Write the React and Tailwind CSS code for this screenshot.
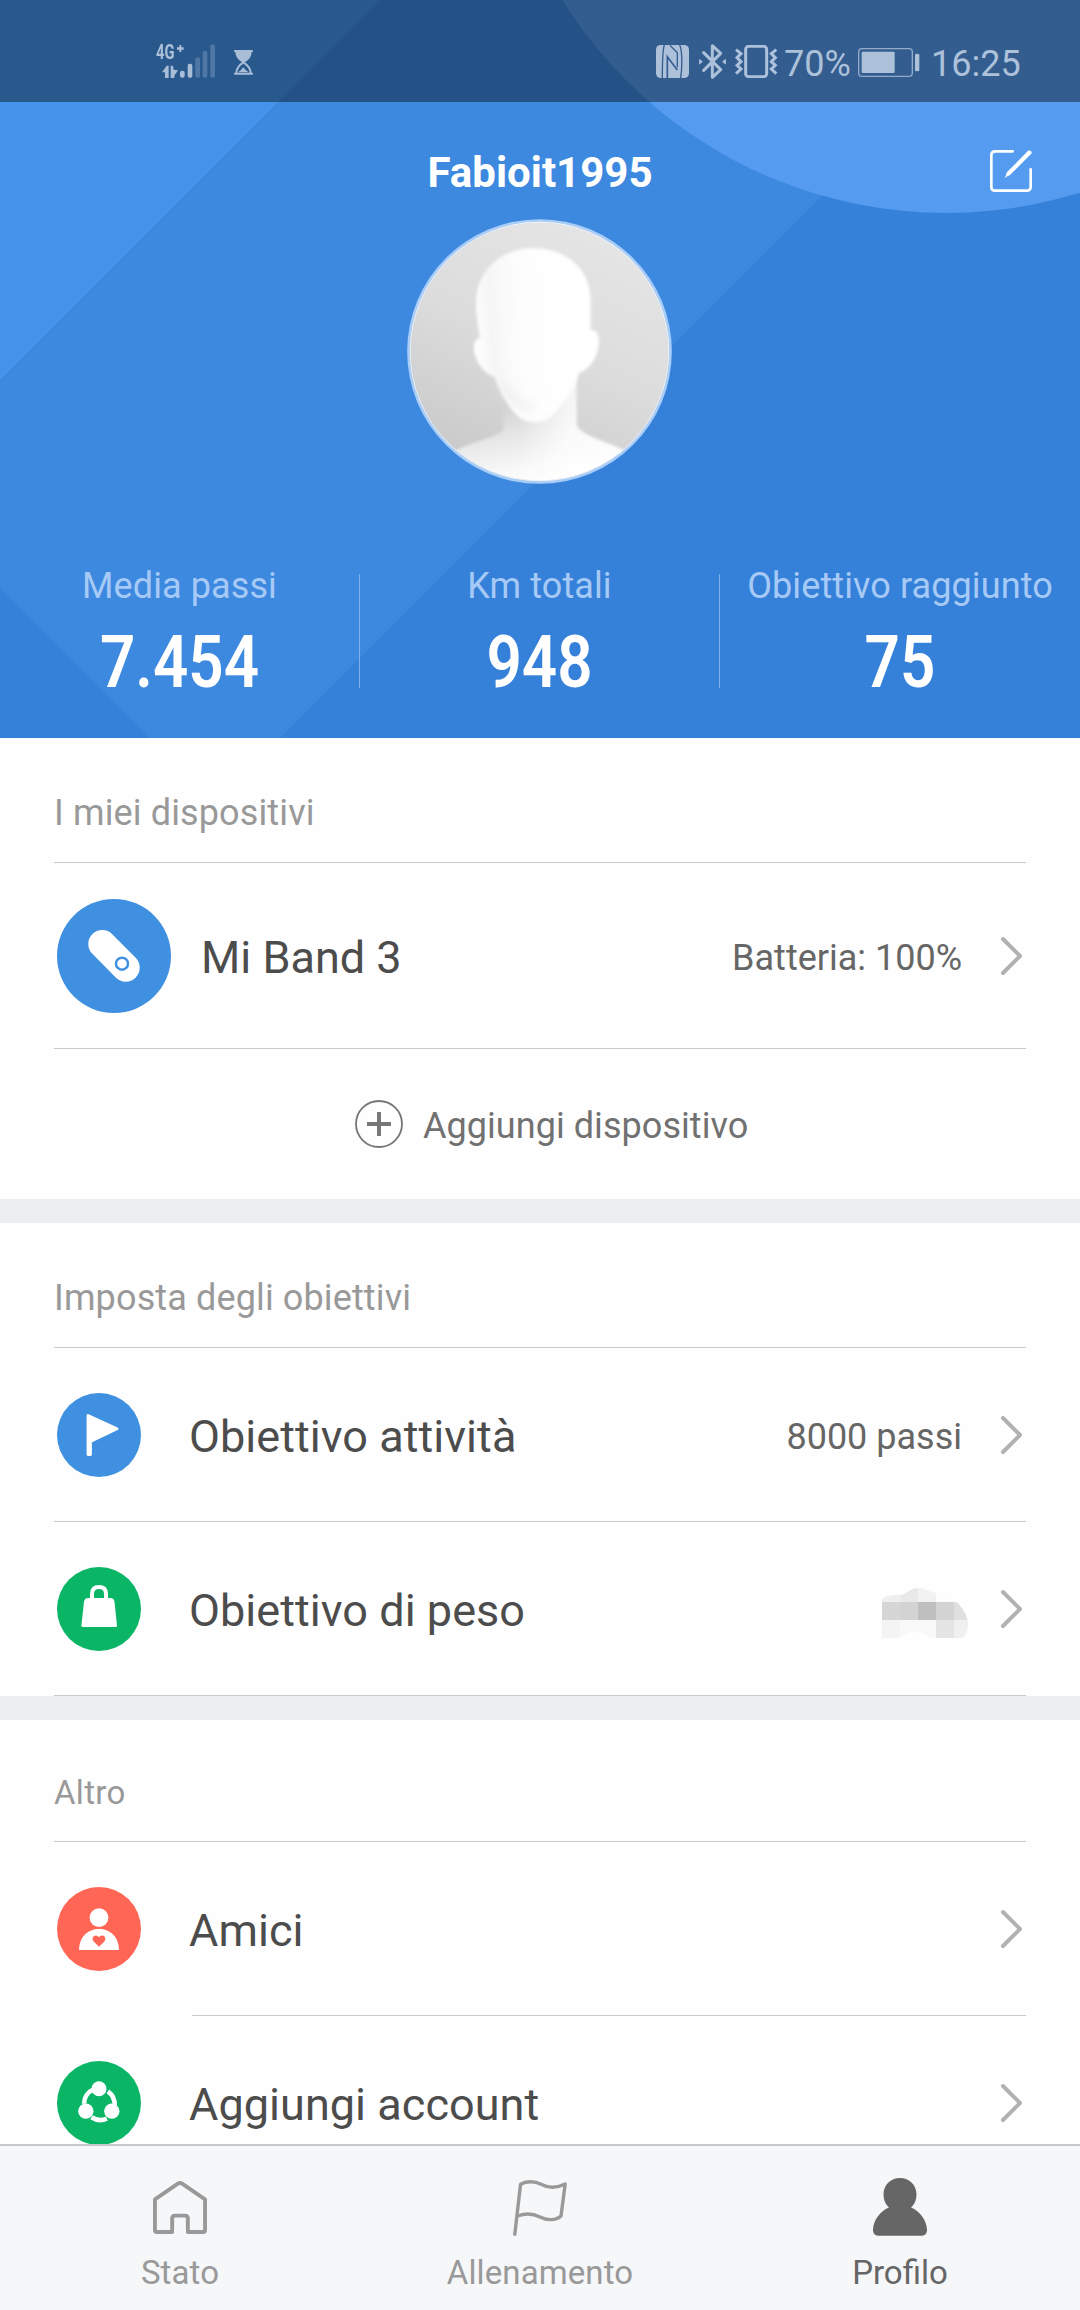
import React from "react";

function HeaderBackdrop() {
  return (
    <svg className="absolute inset-0 h-full w-full" viewBox="0 0 1080 738" preserveAspectRatio="none">
      <rect width="1080" height="738" fill="#3581d9" />
      <path d="M0 0H1018L280 738H150L0 588Z" fill="#3e89e0" />
      <path d="M0 0H380L0 380Z" fill="#4593ea" />
      <circle cx="946" cy="-239" r="452" fill="#559bef" />
    </svg>
  );
}

function SignalIcon() {
  return (
    <svg className="block h-[34px] w-[62px]" viewBox="48 73 186 102" fill="#a9bdd7">
      <path d="M75 175V158H66L80 138H86V175ZM92 138H99L101 150L114 152L103 168V175H92Z" />
      <rect x="120" y="153" width="14" height="21" rx="6" />
      <rect x="143" y="132" width="14" height="42" rx="6" />
      <g fill="#5078a7">
        <rect x="166" y="113" width="14" height="61" rx="6" />
        <rect x="188" y="93" width="14" height="81" rx="6" />
        <rect x="211" y="74" width="14" height="100" rx="6" />
      </g>
      <path d="M118 76H124V83H131V90H124V97H118V90H111V83H118Z" />
    </svg>
  );
}

function HourglassIcon() {
  return (
    <svg className="block h-[25px] w-[19px]" viewBox="282 90 57 75" fill="#a9bdd7">
      <rect x="282" y="90" width="57" height="6" rx="2" />
      <rect x="282" y="158" width="57" height="6" rx="2" />
      <path d="M286 94H335C335 112 325 121 314 127H307C296 121 286 112 286 94Z" />
      <path d="M289 160C289 143 298 135 310 127C323 135 332 143 332 160" fill="none" stroke="#a9bdd7" strokeWidth="6" />
      <path d="M294 157C300 153 305 149 310 142C315 149 320 153 327 157Z" />
    </svg>
  );
}

function NfcIcon() {
  return (
    <svg className="block h-[33px] w-[33px]" viewBox="48 75 99 99">
      <rect x="48" y="75" width="99" height="99" rx="14" fill="#adc1da" />
      <g fill="none" stroke="#345d90" strokeLinejoin="miter">
        <path d="M73 75C67 92 67 120 67 174" strokeWidth="4" />
        <path d="M82 174V110L112 150" strokeWidth="5" />
        <path d="M112 142V98L90 76" strokeWidth="4" />
        <path d="M119 75C127 92 127 140 122 174" strokeWidth="4" />
      </g>
    </svg>
  );
}

function BluetoothIcon() {
  return (
    <svg className="block h-[35px] w-[27px]" viewBox="177 72 81 105" fill="none" stroke="#adc1da" strokeWidth="9" strokeLinejoin="round" strokeLinecap="round">
      <path d="M191 98L242 149L217 172V77L242 100L191 151" />
      <path d="M179 119L187 125L179 131ZM256 119L248 125L256 131Z" fill="#adc1da" strokeWidth="3" />
    </svg>
  );
}

function VibrateIcon() {
  return (
    <svg className="block h-[33px] w-[43px]" viewBox="287 75 129 99" fill="none" stroke="#adc1da" strokeWidth="9">
      <rect x="319" y="79" width="63" height="91" rx="9" />
      <path strokeWidth="9" d="M290 89L305 101L293 113L305 125L293 136L305 147L290 161M411 89L396 101L408 113L396 125L408 136L396 147L411 161" />
    </svg>
  );
}

function BatteryIcon() {
  return (
    <svg className="block h-[29px] w-[62px]" viewBox="658 84 186 87">
      <rect x="660" y="86" width="161" height="83" rx="10" fill="none" stroke="#94abc9" strokeWidth="4" />
      <rect x="669" y="95" width="99" height="64" rx="3" fill="#adc1da" />
      <rect x="829" y="101" width="13" height="53" rx="5" fill="#adc1da" />
    </svg>
  );
}

function StatusBar() {
  return (
    <div className="relative flex h-[102px] items-start bg-black/40 text-[#adc1da]">
      <div className="relative ml-[156px] mt-[44px]">
        <SignalIcon />
        <span className="absolute left-0 top-0 origin-left scale-x-[0.7] text-[21px] font-bold leading-[17px]">4G</span>
      </div>
      <div className="ml-[16px] mt-[50px]"><HourglassIcon /></div>
      <div className="ml-[403px] mt-[45px]"><NfcIcon /></div>
      <div className="ml-[10px] mt-[44px]"><BluetoothIcon /></div>
      <div className="ml-[9px] mt-[45px]"><VibrateIcon /></div>
      <span className="ml-[6px] mt-[43px] w-[68px] text-[36px] leading-[42px]">70%</span>
      <div className="ml-[6px] mt-[48px]"><BatteryIcon /></div>
      <span className="ml-[11px] mt-[43px] text-[36px] leading-[42px]">16:25</span>
    </div>
  );
}

function EditIcon() {
  return (
    <svg className="block h-[42px] w-[42px]" viewBox="1050 390 126 126" fill="none" stroke="#fff" strokeWidth="8" strokeLinecap="round">
      <path d="M1118 394H1066Q1054 394 1054 406V500Q1054 512 1066 512H1160Q1172 512 1172 500V448" />
      <path d="M1166 391L1175 400L1112 463L1094 474L1103 455Z" fill="#fff" stroke="none" />
      <path d="M1169 397L1105 461" strokeWidth="11" />
    </svg>
  );
}

function Avatar() {
  return (
    <svg className="ml-[407px] block h-[265px] w-[265px]" viewBox="81 267 795 795">
      <defs>
        <clipPath id="avatar-clip"><circle cx="478.5" cy="664.5" r="387" /></clipPath>
        <linearGradient id="avatar-bg" x1="0.75" y1="0" x2="0.3" y2="1">
          <stop offset="0" stopColor="#e6e6e6" />
          <stop offset="0.5" stopColor="#dcdcdc" />
          <stop offset="1" stopColor="#c8c8c8" />
        </linearGradient>
        <linearGradient id="avatar-face" x1="0" y1="0.55" x2="1" y2="0.45">
          <stop offset="0" stopColor="#fff" />
          <stop offset="0.14" stopColor="#f6f6f6" />
          <stop offset="0.38" stopColor="#fdfdfd" />
          <stop offset="1" stopColor="#fff" />
        </linearGradient>
        <linearGradient id="avatar-neck" gradientUnits="userSpaceOnUse" x1="400" y1="820" x2="440" y2="1060">
          <stop offset="0" stopColor="#d2d2d2" />
          <stop offset="0.35" stopColor="#e4e4e4" />
          <stop offset="0.8" stopColor="#f8f8f8" />
          <stop offset="1" stopColor="#fdfdfd" />
        </linearGradient>
        <linearGradient id="avatar-neck-light" gradientUnits="userSpaceOnUse" x1="370" y1="0" x2="600" y2="0">
          <stop offset="0.2" stopColor="#fff" stopOpacity="0" />
          <stop offset="0.85" stopColor="#fff" stopOpacity="0.75" />
        </linearGradient>
        <filter id="avatar-soft"><feGaussianBlur stdDeviation="4" /></filter>
        <filter id="avatar-shade" x="-50%" y="-50%" width="200%" height="200%"><feGaussianBlur stdDeviation="14" /></filter>
      </defs>
      <circle cx="478.5" cy="664.5" r="397" fill="#a9cdf6" />
      <circle cx="478.5" cy="664.5" r="389" fill="#f3f7fc" />
      <g clipPath="url(#avatar-clip)">
        <rect x="81" y="267" width="795" height="795" fill="url(#avatar-bg)" />
        <g filter="url(#avatar-soft)">
          <path d="M370 770V895C365 920 290 930 225 962L180 1100H780L735 962C680 935 600 915 590 885V730Z" fill="url(#avatar-neck)" />
          <path d="M370 770V895C365 920 290 930 225 962L180 1100H780L735 962C680 935 600 915 590 885V730Z" fill="url(#avatar-neck-light)" />
        </g>
        <g filter="url(#avatar-soft)">
          <path d="M460 354C560 354 632 420 632 510V600C650 600 660 615 656 645C652 685 625 722 598 728C580 780 550 825 518 856C490 884 440 884 410 856C375 820 360 780 343 742C308 728 282 690 282 655C282 630 292 624 300 624C294 590 286 550 289 505C295 420 365 354 460 354Z" fill="url(#avatar-face)" />
        </g>
        <path d="M365 750C385 800 420 828 460 832" fill="none" stroke="#eeeeee" strokeWidth="20" filter="url(#avatar-shade)" />
      </g>
    </svg>
  );
}

const stats = [
  { label: "Media passi", value: "7.454" },
  { label: "Km totali", value: "948" },
  { label: "Obiettivo raggiunto", value: "75" },
];

function Header() {
  return (
    <header className="relative h-[738px] shrink-0 overflow-hidden">
      <HeaderBackdrop />
      <StatusBar />
      <div className="relative grid h-[117px] grid-cols-[1fr_auto_1fr] items-center px-[48px] pt-[21px]">
        <h1 className="col-start-2 pt-[3px] text-[42px] font-bold leading-[46px] text-white">Fabioit1995</h1>
        <div className="justify-self-end"><EditIcon /></div>
      </div>
      <div className="relative"><Avatar /></div>
      <div className="relative mt-[90px] grid grid-cols-3 text-center">
        {stats.map((s) => (
          <div key={s.label} className="h-[114px] border-r border-[#7fb0ec] last:border-r-0">
            <div className="whitespace-nowrap text-[36px] leading-[24px] tracking-[0.1px] text-[#a6caf5]">{s.label}</div>
            <div className="mt-[29px] scale-x-[0.86] text-[72px] font-semibold leading-[72px] text-white">{s.value}</div>
          </div>
        ))}
      </div>
    </header>
  );
}

function Chevron() {
  return (
    <svg className="ml-[38px] mr-[4px] block h-[40px] w-[22px] shrink-0" viewBox="0 0 22 40" fill="none" stroke="#b1b1b1" strokeWidth="4" strokeLinecap="round" strokeLinejoin="round">
      <path d="M3 3L20 20L3 37" />
    </svg>
  );
}

function BandIcon() {
  return (
    <svg className="block h-[114px] w-[114px]" viewBox="0 0 114 114">
      <circle cx="57" cy="57" r="57" fill="#3f90e0" />
      <path d="M45.3 45L68.7 68.7" stroke="#fff" strokeWidth="28" strokeLinecap="round" />
      <circle cx="65" cy="64.7" r="6" fill="#fff" stroke="#3f90e0" strokeWidth="2.4" />
    </svg>
  );
}

function GoalFlagIcon() {
  return (
    <svg className="block h-[84px] w-[84px]" viewBox="0 0 84 84">
      <circle cx="42" cy="42" r="42" fill="#3f90e0" />
      <path d="M31 22.500L60 35.800L33.500 48.500V61.500H31Z" fill="#fff" stroke="#fff" strokeWidth="2.800" strokeLinejoin="round" />
    </svg>
  );
}

function WeightIcon() {
  return (
    <svg className="block h-[84px] w-[84px]" viewBox="0 0 84 84">
      <circle cx="42" cy="42" r="42" fill="#0ab566" />
      <path d="M35 33V27Q35 20 42 20T49 27V33" fill="none" stroke="#fff" strokeWidth="4" />
      <path d="M31 31H53.500Q57 31 57.500 35L60 58.500Q60 60 58.500 60H26Q24.300 60 24.400 58.500L27 35Q27.500 31 31 31Z" fill="#fff" />
    </svg>
  );
}

function FriendsIcon() {
  return (
    <svg className="block h-[84px] w-[84px]" viewBox="159 383 236 236">
      <circle cx="277" cy="501" r="118" fill="#ff6655" />
      <circle cx="277" cy="469" r="26.500" fill="#fff" />
      <path d="M221 560C221 523 246 501 277 501S333 523 333 560Z" fill="#fff" />
      <path d="M277 551L262 536C256 529 260 519 268 519C273 519 276 522 277 525C278 522 281 519 286 519C294 519 298 529 292 536Z" fill="#ff6655" />
    </svg>
  );
}

function AccountsIcon() {
  return (
    <svg className="block h-[84px] w-[84px]" viewBox="159 870 236 236">
      <circle cx="277" cy="988" r="118" fill="#0ab566" />
      <g fill="none" stroke="#fff" strokeWidth="13">
        <path d="M235 990A44 44 0 0 1 262 950" />
        <path d="M302 955A46 46 0 0 1 321 994" />
        <path d="M256 1028A46 46 0 0 0 299 1032" />
      </g>
      <g fill="#fff">
        <circle cx="277" cy="948" r="21" />
        <circle cx="240" cy="1011" r="21.500" />
        <circle cx="313" cy="1011" r="21.500" />
      </g>
    </svg>
  );
}

function MaskedValue() {
  return (
    <svg className="-mr-[10px] mt-[9px] block h-[54px] w-[90px]" viewBox="882 1586 90 54">
      <defs>
        <clipPath id="mask-outline">
          <path d="M882 1599C887 1595 894 1595 902 1595C908 1592 911 1588 918 1588C927 1588 930 1593 938 1593C950 1596 956 1602 958 1603C964 1610 968 1617 968 1624C968 1632 964 1638 961 1638H933C925 1634 920 1632 914 1632C906 1633 904 1636 900 1638H882Z" />
        </clipPath>
      </defs>
      <g clipPath="url(#mask-outline)" shapeRendering="crispEdges">
        <path fill="#efefef" d="M882 1586h18v16h-18z" />
        <path fill="#e9e9e9" d="M900 1586h18v16h-18z" />
        <path fill="#f2f2f2" d="M918 1586h18v16h-18z" />
        <path fill="#fdfdfd" d="M936 1586h32v16h-32z" />
        <path fill="#d6d6d6" d="M882 1602h18v18h-18z" />
        <path fill="#d3d3d3" d="M900 1602h18v18h-18z" />
        <path fill="#bfbfbf" d="M918 1602h18v18h-18z" />
        <path fill="#d3d3d3" d="M936 1602h18v18h-18z" />
        <path fill="#e0e0e0" d="M954 1602h18v18h-18z" />
        <path fill="#f4f4f4" d="M882 1620h18v18h-18z" />
        <path fill="#f9f9f9" d="M900 1620h36v18h-36z" />
        <path fill="#e5e5e5" d="M936 1620h18v18h-18z" />
        <path fill="#f0f0f0" d="M954 1620h18v18h-18z" />
      </g>
    </svg>
  );
}

function Row({ icon, label, value, extra }) {
  return (
    <div className="flex h-[173px] items-center pl-[3px]">
      {icon}
      <span className="ml-[48px] pt-[5px] text-[45px] leading-[54px] tracking-[0.05px] text-[#4c4c4c]">{label}</span>
      <div className="ml-auto flex items-center">
        {value && <span className="pt-[5px] text-[36px] leading-[42px] text-[#666]">{value}</span>}
        {extra}
        <Chevron />
      </div>
    </div>
  );
}

function Divider({ inset }) {
  return <div className={inset ? "ml-[138px] h-px bg-[#c8c9cb]" : "h-px bg-[#c8c9cb]"} />;
}

function Band() {
  return <div className="h-[24px] bg-[#edeef0]" />;
}

function HomeIcon() {
  return (
    <svg className="block h-[53px] w-[54px]" viewBox="428 1207 152 148" fill="none" stroke="#999" strokeWidth="11" strokeLinejoin="round">
      <path d="M482 1350V1312Q482 1304 490 1304H518Q526 1304 526 1312V1350H569Q574.500 1350 574.500 1344V1258L510 1214Q504 1210 498 1214L433.500 1258V1344Q433.500 1350 439 1350Z" />
      <path d="M487.500 1349H520.500" stroke="#f6f7f9" strokeWidth="14" />
    </svg>
  );
}

function FlagIcon() {
  return (
    <svg className="block h-[56px] w-[54px]" viewBox="0 0 54 56" fill="none" stroke="#999" strokeWidth="3.400" strokeLinecap="round" strokeLinejoin="round">
      <path d="M1.800 54.300L7.500 4.500C13 0.800 22 1 28 4.200C36 8.500 43 8.500 52.200 4L48 36C43 40.500 34 40.800 27 37C19 33 12 33.200 4.500 36" />
    </svg>
  );
}

function PersonIcon() {
  return (
    <svg className="block h-[58px] w-[54px]" viewBox="0 0 54 58" fill="#666">
      <path d="M27 0C36.500 0 43.500 7 43.500 16.500C43.500 22 41.500 26.500 38 29.500C47 33 54 43 54 52C54 55.500 52 57.700 49 57.700H5C2 57.700 0 55.500 0 52C0 43 7 33 16 29.500C12.500 26.500 10.500 22 10.500 16.500C10.500 7 17.500 0 27 0Z" />
    </svg>
  );
}

function NavItem({ icon, label, active }) {
  return (
    <div className="flex flex-col items-center">
      <div className="flex h-[90px] items-end">{icon}</div>
      <span className={active ? "mt-[17px] text-[33px] leading-[40px] text-[#666]" : "mt-[17px] text-[33px] leading-[40px] tracking-[0.1px] text-[#999]"}>{label}</span>
    </div>
  );
}

export default function App() {
  return (
    <div className="flex h-[2310px] w-[1080px] flex-col overflow-hidden bg-[#fefefe] font-['Roboto',sans-serif]">
      <Header />
      <main className="min-h-0 flex-1 overflow-hidden">
        <section className="px-[54px]">
          <h2 className="h-[124px] pt-[54px] text-[36px] leading-[42px] tracking-[0.13px] text-[#999]">I miei dispositivi</h2>
          <Divider />
          <div className="flex h-[185px] items-center pl-[3px]">
            <BandIcon />
            <span className="ml-[30px] pt-[5px] text-[45px] leading-[54px] text-[#4c4c4c]">Mi Band 3</span>
            <span className="ml-auto pt-[5px] text-[36px] leading-[42px] text-[#666]">Batteria: 100%</span>
            <Chevron />
          </div>
          <Divider />
          <div className="flex h-[150px] items-center pl-[301px]">
            <svg className="block h-[48px] w-[48px]" viewBox="0 0 48 48" fill="none" stroke="#777">
              <circle cx="24" cy="24" r="23" strokeWidth="1.800" />
              <path d="M12 24H36M24 12V36" strokeWidth="4" />
            </svg>
            <span className="ml-[20px] pt-[4px] text-[36px] leading-[42px] tracking-[0.05px] text-[#717171]">Aggiungi dispositivo</span>
          </div>
        </section>
        <Band />
        <section className="px-[54px]">
          <h2 className="h-[124px] pt-[54px] text-[36px] leading-[42px] tracking-[0.13px] text-[#999]">Imposta degli obiettivi</h2>
          <Divider />
          <Row icon={<GoalFlagIcon />} label="Obiettivo attività" value="8000 passi" />
          <Divider />
          <Row icon={<WeightIcon />} label="Obiettivo di peso" extra={<MaskedValue />} />
          <Divider />
        </section>
        <Band />
        <section className="px-[54px]">
          <h2 className="h-[121px] pt-[52px] text-[33px] leading-[42px] tracking-[0.3px] text-[#999]">Altro</h2>
          <Divider />
          <Row icon={<FriendsIcon />} label="Amici" />
          <Divider inset />
          <Row icon={<AccountsIcon />} label="Aggiungi account" />
        </section>
      </main>
      <nav className="grid h-[166px] shrink-0 grid-cols-3 border-t-2 border-[#c8c9cb] bg-[#f6f7f9]">
        <NavItem icon={<div className="pb-[2px]"><HomeIcon /></div>} label="Stato" />
        <NavItem icon={<FlagIcon />} label="Allenamento" />
        <NavItem icon={<PersonIcon />} label="Profilo" active />
      </nav>
    </div>
  );
}
